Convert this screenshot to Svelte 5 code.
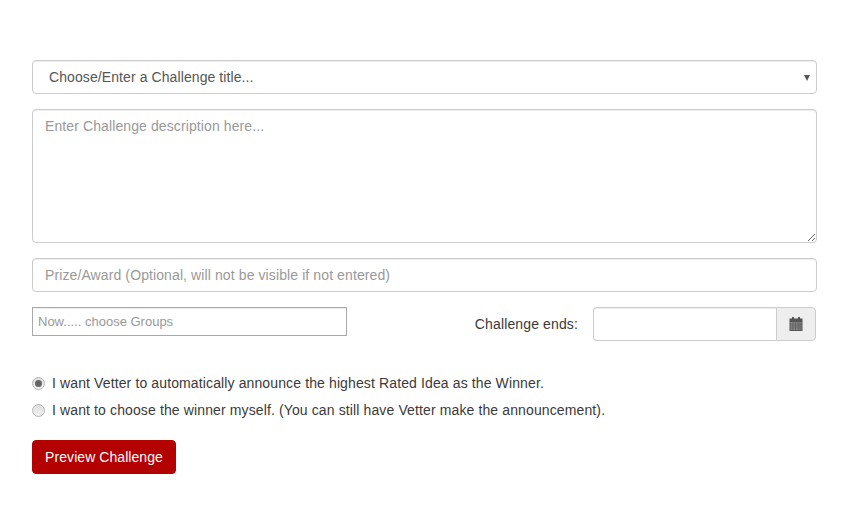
<script>
  let winner = $state('auto');
</script>

<form class="challenge-form" onsubmit={(e) => e.preventDefault()}>
  <div class="select-box">
    <span>Choose/Enter a Challenge title...</span>
    <i class="caret"></i>
  </div>

  <textarea class="control description" placeholder="Enter Challenge description here..."></textarea>

  <input class="control prize" type="text" placeholder="Prize/Award (Optional, will not be visible if not entered)" />

  <div class="meta-row">
    <input class="groups" type="text" placeholder="Now..... choose Groups" />
    <div class="ends">
      <span class="ends-label">Challenge ends:</span>
      <div class="date-group">
        <input class="date-input" type="text" />
        <span class="date-addon">
          <svg width="14" height="14" viewBox="0 0 14 14">
            <rect x="3" y="0" width="2" height="2.500" fill="#555" />
            <rect x="9" y="0" width="2" height="2.500" fill="#555" />
            <path d="M0.500 1.500h13v12.500h-13z" fill="#555" />
            <path d="M1.500 5h11v8h-11z" fill="#8c8c8c" />
            <path d="M1.500 7h11M1.500 9h11M1.500 11h11M4 5v8M6.500 5v8M9 5v8M11 5v8" stroke="#555" stroke-width="0.6" />
          </svg>
        </span>
      </div>
    </div>
  </div>

  <div class="radios">
    <label class="radio">
      <input type="radio" name="winner" value="auto" bind:group={winner} />
      <span>I want Vetter to automatically announce the highest Rated Idea as the Winner.</span>
    </label>
    <label class="radio">
      <input type="radio" name="winner" value="self" bind:group={winner} />
      <span>I want to choose the winner myself. (You can still have Vetter make the announcement).</span>
    </label>
  </div>

  <button class="preview" type="submit">Preview Challenge</button>
</form>

<style>
  :global(body) {
    margin: 0;
    background: #fff;
    font-family: "Liberation Sans", Arial, sans-serif;
    font-size: 14px;
    color: #3a3a3a;
  }

  .challenge-form {
    box-sizing: border-box;
    width: 845px;
    height: 526px;
    padding: 60px 28px 0 32px;
    display: flex;
    flex-direction: column;
  }

  .select-box {
    box-sizing: border-box;
    height: 34px;
    border: 1px solid #ccc;
    border-radius: 4px;
    padding: 0 6px 0 16px;
    display: flex;
    align-items: center;
    justify-content: space-between;
    color: #555;
    letter-spacing: 0.09px;
    box-shadow: inset 0 1px 1px rgba(0, 0, 0, 0.075);
  }

  .caret {
    width: 0;
    height: 0;
    margin-top: 1px;
    border-left: 3.5px solid transparent;
    border-right: 3.5px solid transparent;
    border-top: 6px solid #555;
  }

  .control {
    box-sizing: border-box;
    display: block;
    width: 100%;
    border: 1px solid #ccc;
    border-radius: 4px;
    padding: 6px 12px;
    font: inherit;
    line-height: 20px;
    letter-spacing: 0.105px;
    color: #555;
    box-shadow: inset 0 1px 1px rgba(0, 0, 0, 0.075);
    outline: none;
  }

  .control::placeholder,
  .groups::placeholder {
    color: #999;
    opacity: 1;
  }

  .description {
    margin-top: 15px;
    height: 134px;
    resize: vertical;
  }

  .prize {
    margin-top: 15px;
    height: 34px;
  }

  .meta-row {
    margin-top: 15px;
    display: flex;
    justify-content: space-between;
    align-items: flex-start;
  }

  .groups {
    box-sizing: border-box;
    width: 315px;
    height: 29px;
    border: 1px solid #a9a9a9;
    padding: 0 5px;
    font: inherit;
    font-size: 13px;
    outline: none;
    box-shadow: inset 0 1px 1px rgba(0, 0, 0, 0.075);
  }

  .ends {
    display: flex;
    align-items: center;
  }

  .ends-label {
    margin-right: 15px;
    letter-spacing: 0.13px;
  }

  .date-group {
    display: flex;
    height: 34px;
    width: 223px;
    margin-right: 1px;
  }

  .date-input {
    box-sizing: border-box;
    flex: 1;
    min-width: 0;
    border: 1px solid #ccc;
    border-right: 0;
    border-radius: 4px 0 0 4px;
    outline: none;
    box-shadow: inset 0 1px 1px rgba(0, 0, 0, 0.075);
  }

  .date-addon {
    box-sizing: border-box;
    width: 40px;
    display: flex;
    align-items: center;
    justify-content: center;
    background: #eee;
    border: 1px solid #ccc;
    border-radius: 0 4px 4px 0;
  }

  .radios {
    margin-top: 32px;
    display: flex;
    flex-direction: column;
    gap: 7px;
  }

  .radio {
    display: flex;
    align-items: center;
    height: 20px;
    letter-spacing: 0.122px;
  }

  .radio input {
    appearance: none;
    box-sizing: border-box;
    width: 13px;
    height: 13px;
    margin: 0 7px 0 0;
    border: 1px solid #b5b5b5;
    border-radius: 50%;
    background: linear-gradient(#dedede, #f2f2f2);
    position: relative;
  }

  .radio input:checked::after {
    content: "";
    position: absolute;
    left: 2px;
    top: 2px;
    width: 7px;
    height: 7px;
    border-radius: 50%;
    background: #666;
  }

  .preview {
    margin-top: 20px;
    align-self: flex-start;
    box-sizing: border-box;
    width: 144px;
    height: 34px;
    background: #b30000;
    color: #fff;
    border: 1px solid #b30000;
    border-radius: 4px;
    font: inherit;
    letter-spacing: 0.06px;
    cursor: pointer;
  }
</style>
